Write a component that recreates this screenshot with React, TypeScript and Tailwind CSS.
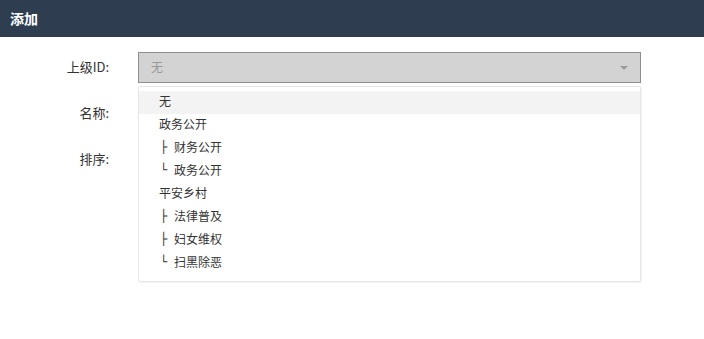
import React from "react";

const items: { label: string; prefix?: string; active?: boolean }[] = [
  { label: "无", active: true },
  { label: "政务公开" },
  { label: "财务公开", prefix: "├" },
  { label: "政务公开", prefix: "└" },
  { label: "平安乡村" },
  { label: "法律普及", prefix: "├" },
  { label: "妇女维权", prefix: "├" },
  { label: "扫黑除恶", prefix: "└" },
];

export default function App() {
  return (
    <div className="w-[704px] h-[339px] bg-white text-[#333] font-['Noto_Sans_CJK_SC','Noto_Sans',sans-serif]">
      {/* Header */}
      <div className="h-[37px] bg-[#2e3e50] flex items-center pl-[10px] pb-[1px]">
        <span className="text-white text-[14px] font-bold">添加</span>
      </div>

      {/* Form */}
      <div className="pt-[15px] flex flex-col gap-[15px]">
        <div className="flex items-center h-[31px]">
          <label className="w-[110px] text-right text-[13px] pr-[1px] pb-[2px]">上级ID:</label>
          <div className="relative ml-[28px] w-[503px]">
            <div className="h-[31px] bg-[#d3d3d3] border border-[#8e8e8e] flex items-center justify-between pl-[12px] pr-[12px]">
              <span className="text-[12px] text-[#999] pb-[1px]">无</span>
              <svg width="8" height="4" viewBox="0 0 8 4">
                <path d="M0 0h8L4 4z" fill="#9a9a9a" />
              </svg>
            </div>
            {/* Dropdown menu */}
            <ul className="absolute left-0 top-[34px] w-[503px] bg-white border border-[#e6e6e6] rounded-[2px] shadow-[1px_1px_2px_rgba(0,0,0,0.06)] pt-[4px] pb-[6px] z-10">
              {items.map((it, i) => (
                <li
                  key={i}
                  className={`h-[23px] flex items-center pl-[20px] pb-[3px] text-[12px] ${it.active ? "bg-[#f3f3f3]" : ""}`}
                >
                  {it.prefix && (
                    <span className="inline-block w-[15px] pl-[1px] font-['DejaVu_Sans',sans-serif]">{it.prefix}</span>
                  )}
                  <span>{it.label}</span>
                </li>
              ))}
            </ul>
          </div>
        </div>
        <div className="flex items-center h-[31px]">
          <label className="w-[110px] text-right text-[13px] pr-[1px] pb-[2px]">名称:</label>
        </div>
        <div className="flex items-center h-[31px]">
          <label className="w-[110px] text-right text-[13px] pr-[1px] pb-[2px]">排序:</label>
        </div>
      </div>
    </div>
  );
}
